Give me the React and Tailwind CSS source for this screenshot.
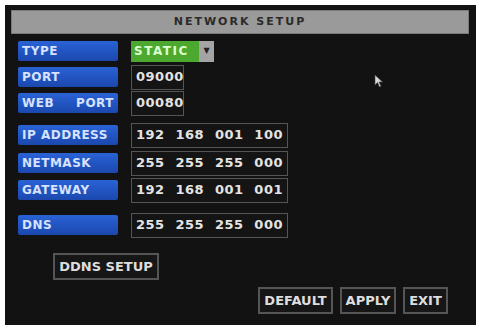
import React from 'react'

const font = { fontFamily: '"DejaVu Sans", "Liberation Sans", sans-serif' }

function Label({ children, spread }) {
    return (
        <div
            className={`flex h-[20px] w-[100px] shrink-0 items-center rounded-[2px] bg-gradient-to-b from-[#2a62d6] to-[#1b48ae] px-[4px] text-[12px] font-bold tracking-[0.5px] text-[#d6e2ff] ${spread ? 'justify-between' : ''}`}
        >
            {children}
        </div>
    )
}

function Box({ width, children }) {
    return (
        <div
            className="flex h-[25px] items-center justify-between border border-[#555] bg-[#141414] px-[4px] text-[13px] font-bold tracking-[0.5px] text-[#e4e4e4]"
            style={{ width }}
        >
            {children}
        </div>
    )
}

function Row({ className = '', children }) {
    return <div className={`flex h-[26px] items-center gap-[13px] ${className}`}>{children}</div>
}

function Button({ children, className = '' }) {
    return (
        <div
            className={`flex h-[27px] items-center justify-center border-2 border-[#555] bg-[#161616] text-[13px] font-bold text-[#dedede] ${className}`}
        >
            {children}
        </div>
    )
}

export default function App() {
    return (
        <div className="h-[328px] w-[478px] overflow-hidden bg-white pl-[5px] pr-[2px] pt-[5px]" style={font}>
            <div className="relative h-[320px] bg-[#121212] pl-[13px]">
                <div className="-ml-[7px] pt-[5px]">
                    <div className="flex h-[24px] w-[458px] items-center justify-center border border-[#7a7a7a] bg-[#9a9a9a] text-[11px] font-bold tracking-[2px] text-[#2a2a2a]">
                        NETWORK SETUP
                    </div>
                </div>

                <Row className="mt-[4px]">
                    <Label>TYPE</Label>
                    <div className="flex h-[21px] items-stretch">
                        <div className="flex w-[68px] items-center bg-[#4da82f] px-[3px] text-[12px] font-bold tracking-[1.5px] text-[#dcffd0]">
                            STATIC
                        </div>
                        <div className="flex w-[15px] items-center justify-center bg-[#a4a4a4] text-[8px] text-[#222]">
                            ▼
                        </div>
                    </div>
                </Row>
                <Row>
                    <Label>PORT</Label>
                    <Box width={53}>09000</Box>
                </Row>
                <Row>
                    <Label spread>
                        <span>WEB</span>
                        <span>PORT</span>
                    </Label>
                    <Box width={53}>00080</Box>
                </Row>
                <Row className="mt-[6px]">
                    <Label>IP ADDRESS</Label>
                    <Box width={157}>
                        <span>192</span>
                        <span>168</span>
                        <span>001</span>
                        <span>100</span>
                    </Box>
                </Row>
                <Row className="mt-[2px]">
                    <Label>NETMASK</Label>
                    <Box width={157}>
                        <span>255</span>
                        <span>255</span>
                        <span>255</span>
                        <span>000</span>
                    </Box>
                </Row>
                <Row className="mt-[1px]">
                    <Label>GATEWAY</Label>
                    <Box width={157}>
                        <span>192</span>
                        <span>168</span>
                        <span>001</span>
                        <span>001</span>
                    </Box>
                </Row>
                <Row className="mt-[9px]">
                    <Label>DNS</Label>
                    <Box width={157}>
                        <span>255</span>
                        <span>255</span>
                        <span>255</span>
                        <span>000</span>
                    </Box>
                </Row>

                <div className="ml-[35px] mt-[15px]">
                    <Button className="h-[25px] w-[106px]">DDNS SETUP</Button>
                </div>

                <div className="mt-[7px] flex justify-end gap-[7px] pr-[28px]">
                    <Button className="w-[75px]">DEFAULT</Button>
                    <Button className="w-[56px]">APPLY</Button>
                    <Button className="w-[45px]">EXIT</Button>
                </div>

                <svg className="absolute left-[369px] top-[69px]" width="10" height="14" viewBox="0 0 10 14">
                    <path d="M1 1 L1 11 L3.5 8.5 L5.5 13 L7 12.3 L5 8 L8.5 8 Z" fill="#d8d8d8" stroke="#444" strokeWidth="0.6" />
                </svg>
            </div>
        </div>
    )
}
